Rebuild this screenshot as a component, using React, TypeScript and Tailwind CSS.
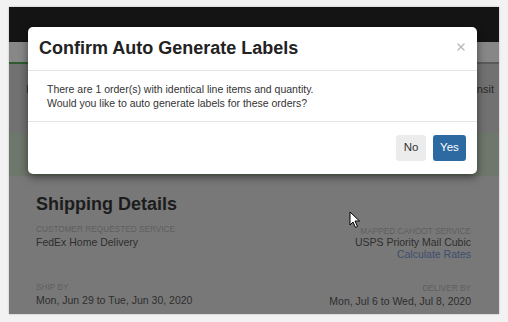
import { X } from "lucide-react";

export default function App() {
  return (
    <div className="w-[508px] h-[322px] bg-[#f2f2f2] pt-[7px] pl-[9px] font-['Liberation_Sans',Arial,sans-serif]">
      <div className="relative w-[490px] h-[307px] overflow-hidden bg-[#787878] shadow-[0_0_2px_rgba(0,0,0,0.25)]">
        {/* dimmed page underneath */}
        <div className="h-[35px] bg-[#141414]" />
        <div className="h-[20px] bg-[#878787]" />
        <div className="flex h-[2px]">
          <div className="w-[440px] bg-[#2f5b2f]" />
          <div className="flex-1 bg-[#5a5a5a]" />
        </div>
        <div className="h-[69px] bg-[#717171] flex items-start justify-between pt-[17px] pl-[17px] pr-[5px] text-[11px] text-[#2a2a2a]">
          <span>ID</span>
          <span>In Transit</span>
        </div>
        <div className="h-[43px] bg-[#6e776b]" />
        <div className="flex justify-between pl-[27px] pr-[28px] pt-[17px]">
          <div className="flex flex-col">
            <h2 className="text-[18px] leading-[22px] font-bold text-[#1c1c1c]">Shipping Details</h2>
            <div className="mt-[10px] text-[8.25px] leading-[9px] uppercase text-[#5f5f5f]">Customer Requested Service</div>
            <div className="mt-[2px] text-[10.5px] leading-[13px] text-[#2e2e2e]">FedEx Home Delivery</div>
            <div className="mt-[34px] text-[8.25px] leading-[9px] uppercase text-[#5f5f5f]">Ship By</div>
            <div className="mt-[2px] text-[10.5px] leading-[13px] text-[#2e2e2e]">Mon, Jun 29 to Tue, Jun 30, 2020</div>
          </div>
          <div className="flex flex-col items-end pt-[34px]">
            <div className="text-[8.25px] leading-[9px] uppercase text-[#5f5f5f]">Mapped Cahoot Service</div>
            <div className="text-[10.5px] leading-[12px] text-[#2e2e2e]">USPS Priority Mail Cubic</div>
            <div className="text-[10.5px] leading-[12px] text-[#3d4e6e]">Calculate Rates</div>
            <div className="mt-[24px] text-[8.25px] leading-[9px] uppercase text-[#5f5f5f]">Deliver By</div>
            <div className="mt-[2px] text-[10.5px] leading-[13px] text-[#2e2e2e]">Mon, Jul 6 to Wed, Jul 8, 2020</div>
          </div>
        </div>

        {/* modal */}
        <div className="absolute left-[19px] top-[20px] w-[449px] h-[147px] bg-white rounded-[5px] shadow-[0_3px_9px_rgba(0,0,0,0.5)] flex flex-col">
          <div className="h-[44px] border-b border-[#e5e5e5] flex items-center justify-between pl-[11px] pr-[10px]">
            <h1 className="text-[18px] font-bold text-[#222]">Confirm Auto Generate Labels</h1>
            <X className="w-[12px] h-[12px] text-[#bdbdbd] -mt-[4px]" strokeWidth={3} />
          </div>
          <div className="h-[51px] border-b border-[#e5e5e5] pl-[19px] pt-[11px] text-[10.5px] leading-[14px] text-[#333]">
            <p>There are 1 order(s) with identical line items and quantity.</p>
            <p>Would you like to auto generate labels for these orders?</p>
          </div>
          <div className="flex-1 flex items-start justify-end gap-[7px] pr-[11px] pt-[13px]">
            <button className="h-[26px] w-[30px] rounded-[3px] bg-[#ececec] text-[11.5px] text-[#333]">No</button>
            <button className="h-[26px] w-[33px] rounded-[3px] bg-[#2d6aa1] text-[11.5px] text-white">Yes</button>
          </div>
        </div>

        {/* mouse cursor */}
        <svg className="absolute left-[340px] top-[204px]" width="12" height="18" viewBox="0 0 12 18">
          <path d="M1 1 L1 14 L4 11 L6.5 16.5 L8.5 15.5 L6 10 L10.5 10 Z" fill="white" stroke="black" strokeWidth="1" strokeLinejoin="round" />
        </svg>
      </div>
    </div>
  );
}
